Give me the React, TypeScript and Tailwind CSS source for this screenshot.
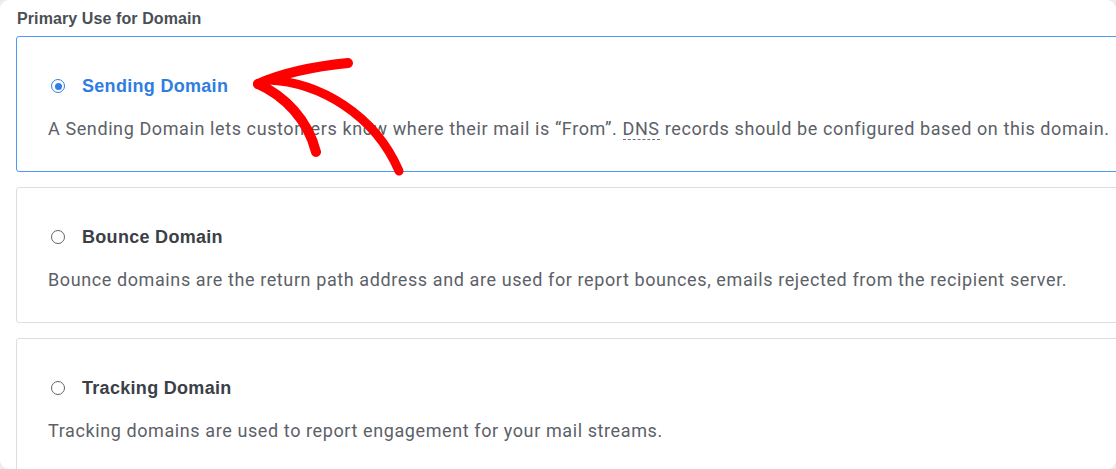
import type { ReactNode } from "react";

type Option = {
  id: string;
  title: string;
  desc: ReactNode;
  checked?: boolean;
};

const options: Option[] = [
  {
    id: "sending",
    title: "Sending Domain",
    checked: true,
    desc: (
      <>
        A Sending Domain lets customers know where their mail is “From”.{" "}
        <span className="border-b border-dashed border-[#6b7178]">DNS</span> records should be configured based on this
        domain.
      </>
    ),
  },
  {
    id: "bounce",
    title: "Bounce Domain",
    desc: "Bounce domains are the return path address and are used for report bounces, emails rejected from the recipient server.",
  },
  {
    id: "tracking",
    title: "Tracking Domain",
    desc: "Tracking domains are used to report engagement for your mail streams.",
  },
];

function Radio({ checked }: { checked?: boolean }) {
  return (
    <span
      className={`flex h-[14px] w-[14px] shrink-0 items-center justify-center rounded-full border-[1.5px] ${
        checked ? "border-[#2f7fe6]" : "border-[#5f656c]"
      }`}
    >
      {checked && <span className="h-[7px] w-[7px] rounded-full bg-[#2f7fe6]" />}
    </span>
  );
}

function Card({ o }: { o: Option }) {
  return (
    <div
      className={`h-[136px] w-[1120px] shrink-0 rounded-[3px] border bg-white pl-[31px] pt-[37px] ${
        o.checked ? "border-[#4a9af3]" : "border-[#dadfe4]"
      }`}
    >
      <div className="flex h-[24px] items-center">
        <span className="ml-[3px] mr-[17px]">
          <Radio checked={o.checked} />
        </span>
        <span
          className={`text-[18px] font-bold tracking-[0.3px] ${o.checked ? "text-[#2f7de1]" : "text-[#3b4047]"}`}
          style={{ fontFamily: "'Liberation Sans', Arial, sans-serif" }}
        >
          {o.title}
        </span>
      </div>
      <p className="mt-[19px] whitespace-nowrap text-[18px] leading-[24px] tracking-[0.6px] text-[#5c6168]">{o.desc}</p>
    </div>
  );
}

function Arrow() {
  return (
    <svg className="pointer-events-none absolute left-0 top-0" width="1116" height="469" viewBox="0 0 1116 469">
      <g fill="none" stroke="#ff0000" strokeLinecap="round" strokeLinejoin="round">
        <path d="M258 84 C 285 72, 318 66, 348 63" strokeWidth="10" />
        <path d="M258 84 C 285 96, 308 120, 316 152" strokeWidth="10" />
        <path d="M268 80 C 320 82, 375 115, 399 171" strokeWidth="9" />
      </g>
    </svg>
  );
}

export default function App() {
  return (
    <div className="h-[469px] w-[1116px] overflow-hidden bg-[#ececec]">
      <div
        className="relative h-full w-full overflow-hidden rounded-[9px] bg-white"
        style={{ fontFamily: "Roboto, 'Liberation Sans', sans-serif" }}
      >
        <div className="flex flex-col pl-[16px] pt-[9px]">
          <div
            className="h-[20px] pl-[1px] text-[16px] font-bold leading-[20px] tracking-[0.1px] text-[#4a4f55]"
            style={{ fontFamily: "'Liberation Sans', Arial, sans-serif" }}
          >
            Primary Use for Domain
          </div>
          <div className="mt-[7px] flex flex-col gap-[15px]">
            {options.map((o) => (
              <Card key={o.id} o={o} />
            ))}
          </div>
        </div>
        <Arrow />
      </div>
    </div>
  );
}
